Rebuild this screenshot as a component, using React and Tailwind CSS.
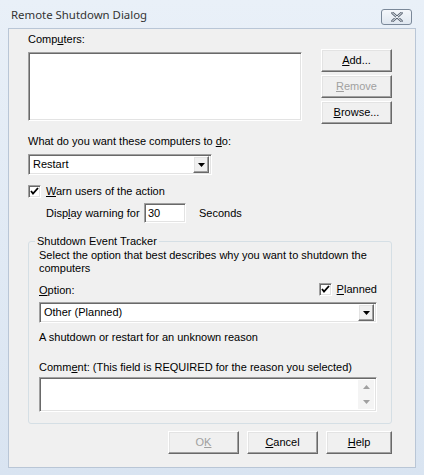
import React from "react";

const font = "font-['Liberation_Sans',Arial,sans-serif] text-[11px] leading-[13px] text-black";

const raised =
  "border border-t-white border-l-white border-r-[#696969] border-b-[#696969] shadow-[inset_-1px_-1px_0_#a0a0a0,inset_1px_1px_0_#e3e3e3] bg-[#f0f0f0]";
const sunken =
  "border border-t-[#a0a0a0] border-l-[#a0a0a0] border-r-white border-b-white shadow-[inset_1px_1px_0_#696969,inset_-1px_-1px_0_#e3e3e3] bg-white";

const U = ({ children }) => <span className="underline underline-offset-[1px]">{children}</span>;

const Button = ({ children, disabled, className = "" }) => (
  <div
    className={`${raised} h-[23px] flex items-center justify-center ${
      disabled ? "text-[#a0a0a0]" : ""
    } ${className}`}
  >
    {children}
  </div>
);

const Arrow = () => (
  <svg width="7" height="4" viewBox="0 0 7 4">
    <path d="M0 0h7L3.5 4z" fill="#000" />
  </svg>
);

const Combo = ({ value, className = "" }) => (
  <div className={`${sunken} h-[21px] flex items-center pl-[4px] pr-[2px] ${className}`}>
    <span className="flex-1">{value}</span>
    <div className={`${raised} w-[16px] h-[17px] flex items-center justify-center`}>
      <Arrow />
    </div>
  </div>
);

const Check = () => (
  <div className={`${sunken} w-[13px] h-[13px] flex items-center justify-center`}>
    <svg width="9" height="9" viewBox="0 0 9 9">
      <path d="M1 4l2 2.5L8 1" stroke="#000" strokeWidth="1.8" fill="none" />
    </svg>
  </div>
);

const App = () => {
  return (
    <div className="w-[424px] h-[475px] bg-[linear-gradient(#e9f0f8,#d9e4f1)] flex flex-col">
      <div className="h-[28px] flex items-center justify-between pl-[11px] pr-[12px]">
        <span className="font-['Noto_Sans',sans-serif] text-[11.4px] text-[#333] mt-[1px]">
          Remote Shutdown Dialog
        </span>
        <div className="w-[31px] h-[16px] mt-[6px] rounded-[3px] border border-[#7a8899] bg-[linear-gradient(#f4f7fb,#dfe7f0)] flex items-center justify-center">
          <svg width="12" height="10" viewBox="0 0 12 10">
            <path
              d="M1.5 1l9 8M10.5 1l-9 8"
              stroke="#5b6574"
              strokeWidth="2.6"
              strokeLinecap="round"
            />
            <path
              d="M1.5 1l9 8M10.5 1l-9 8"
              stroke="#eef2f6"
              strokeWidth="1"
              strokeLinecap="round"
            />
          </svg>
        </div>
      </div>

      <div className={`${font} mx-[8px] flex-1 mb-[7px] bg-[#f0f0f0] border border-[#b9c6d6] pl-[19px] pt-[4px]`}>
        <div>
          Comp<U>u</U>ters:
        </div>
        <div className="flex mt-[3px]">
          <div className={`${sunken} w-[274px] h-[69px] mt-[3px]`} />
          <div className="ml-[19px] flex flex-col gap-[3px] w-[71px]">
            <Button>
              <U>A</U>dd...
            </Button>
            <Button disabled>
              <U>R</U>emove
            </Button>
            <Button>
              <U>B</U>rowse...
            </Button>
          </div>
        </div>

        <div className="mt-[11px]">
          What do you want these computers to <U>d</U>o:
        </div>
        <Combo value="Restart" className="w-[184px] mt-[6px]" />

        <div className="flex items-center mt-[10px]">
          <Check />
          <span className="ml-[5px]">
            <U>W</U>arn users of the action
          </span>
        </div>
        <div className="flex items-center ml-[18px] mt-[5px]">
          <span className="w-[98px]">
            Disp<U>l</U>ay warning for
          </span>
          <div className={`${sunken} w-[42px] h-[20px] flex items-center pl-[3px]`}>30</div>
          <span className="ml-[13px]">Seconds</span>
        </div>

        <fieldset className="mt-[12px] w-[364px] border border-[#d5dfe5] rounded-[3px] px-[10px] pb-[11px]">
          <legend className="ml-[-4px] px-[2px]">Shutdown Event Tracker</legend>
          <div className="mt-[1px] w-[330px]">
            Select the option that best describes why you want to shutdown the computers
          </div>
          <div className="flex justify-between mt-[6px]">
            <span className="mt-[3px]">
              <U>O</U>ption:
            </span>
            <div className="flex items-center mr-[4px]">
              <Check />
              <span className="ml-[5px]">
                <U>P</U>lanned
              </span>
            </div>
          </div>
          <Combo value="Other (Planned)" className="w-[338px] mt-[5px]" />
          <div className="mt-[8px]">A shutdown or restart for an unknown reason</div>
          <div className="mt-[17px]">
            Comm<U>e</U>nt: (This field is REQUIRED for the reason you selected)
          </div>
          <div className={`${sunken} w-[338px] h-[35px] mt-[3px] flex justify-end p-[2px]`}>
            <div className="w-[16px] bg-[#f4f4f4] flex flex-col items-center justify-between py-[5px]">
              <svg width="7" height="4" viewBox="0 0 7 4">
                <path d="M0 4h7L3.5 0z" fill="#a0a0a0" />
              </svg>
              <svg width="7" height="4" viewBox="0 0 7 4">
                <path d="M0 0h7L3.5 4z" fill="#a0a0a0" />
              </svg>
            </div>
          </div>
        </fieldset>

        <div className="flex justify-end w-[364px] mt-[7px] gap-[8px]">
          <Button disabled className="w-[71px]">
            O<U>K</U>
          </Button>
          <Button className="w-[71px]">
            <U>C</U>ancel
          </Button>
          <Button className="w-[66px]">
            <U>H</U>elp
          </Button>
        </div>
      </div>
    </div>
  );
};

export default App;
